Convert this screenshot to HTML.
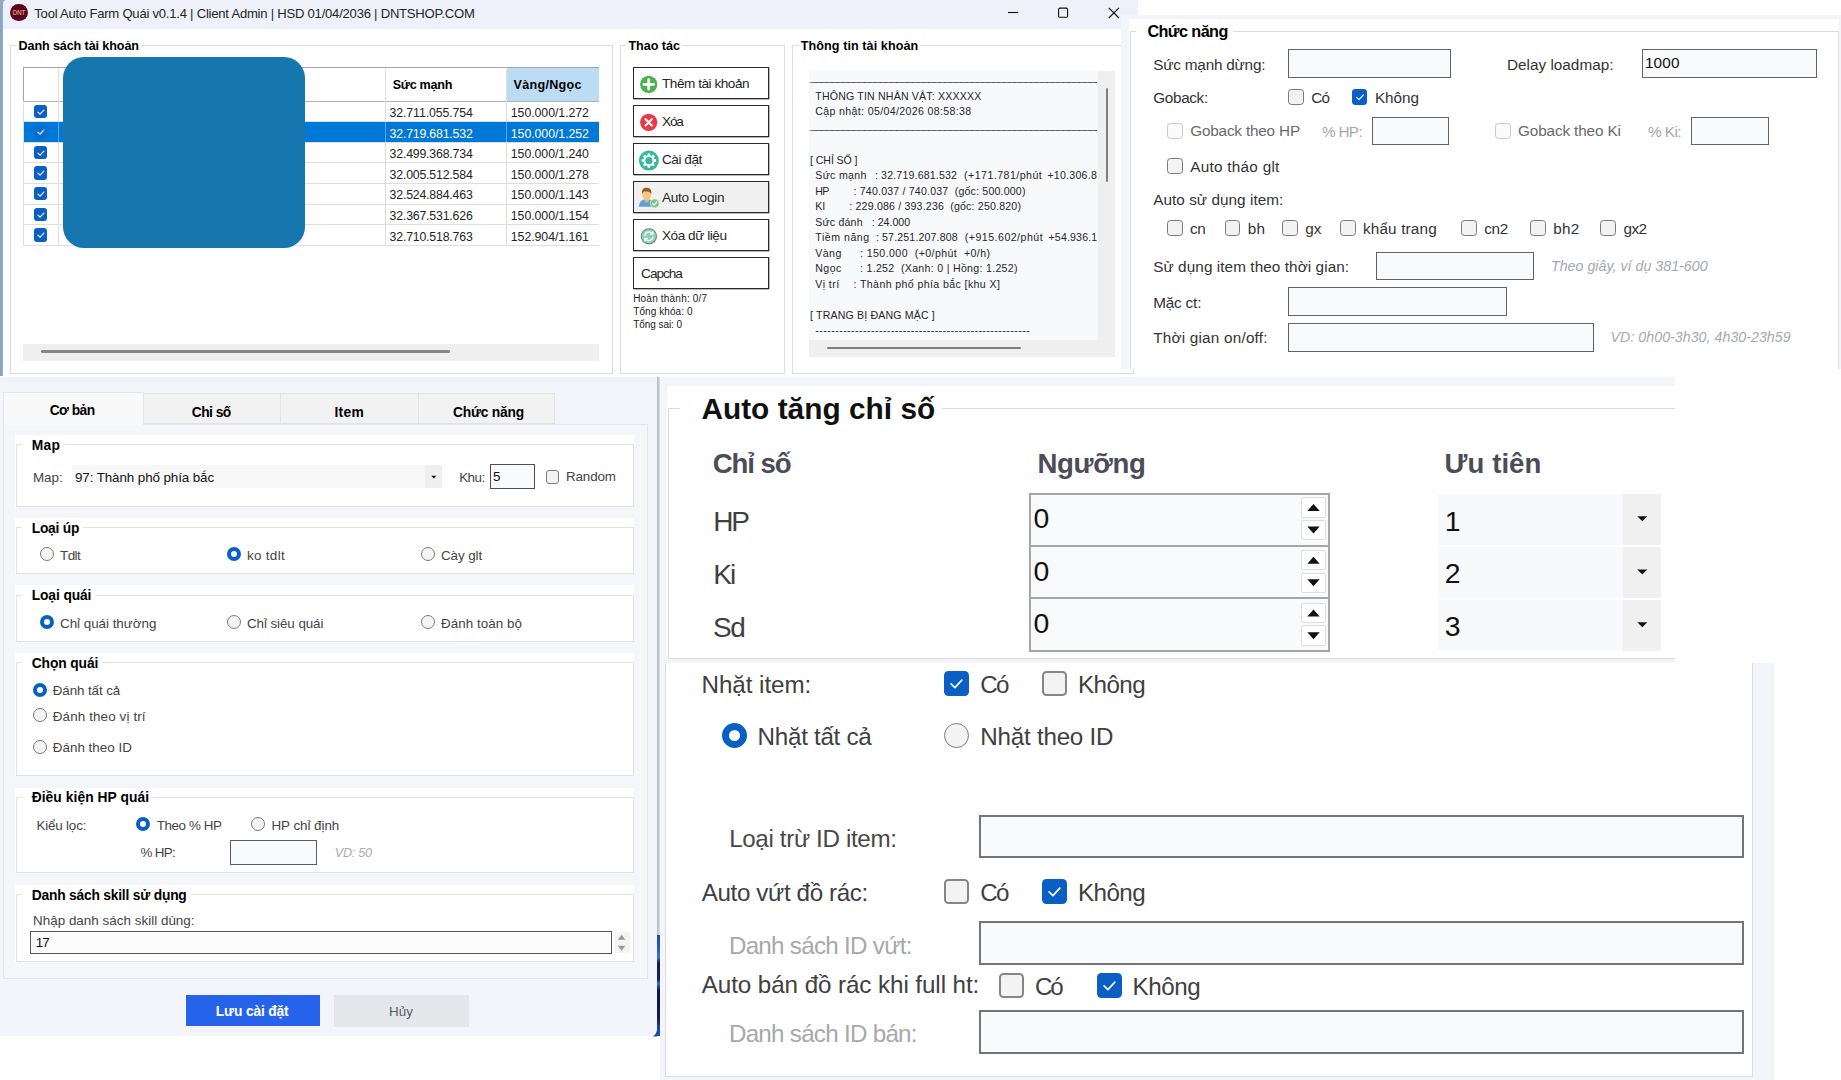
<!DOCTYPE html><html lang="vi"><head><meta charset="utf-8"><title>Tool Auto Farm Quái</title><style>

html,body{margin:0;padding:0;background:#fff;}
body{width:1841px;height:1080px;position:relative;overflow:hidden;font-family:"Liberation Sans", sans-serif;}
.a{position:absolute;}
.t{position:absolute;white-space:pre;line-height:1;}

</style></head><body>
<section aria-label="Tool Auto Farm Quái - cửa sổ chính">
<div class="a" style="left:0px;top:0px;width:1138px;height:377.3px;background:#fff;"></div>
<div class="a" style="left:0px;top:0px;width:1138px;height:28.6px;background:#eef1f9;"></div>
<div class="a" style="left:0px;top:0px;width:3.1px;height:376.2px;background:linear-gradient(90deg,#84a2bf,#93aec8);"></div>
<svg class="a" style="left:0;top:0" width="8" height="6"><path d="M0 0 H6 C4.2 0.4 3.4 1.4 3.1 3.4 V0 Z M3.1 0 V4 H0 V0 Z" fill="#8ba8c4"/></svg>
<div class="a" style="left:10.2px;top:3.9px;width:17.4px;height:17.4px;background:#5e0424;border-radius:9px;"></div>
<div class="t" style="left:12.5px;top:10.16px;font-size:6.6px;color:#c98f5e;font-weight:bold;letter-spacing:-0.35px;">DNT</div>
<div class="t" style="left:34.3px;top:6.8px;font-size:13.1px;color:#262626;letter-spacing:-0.24px;">Tool Auto Farm Quái v0.1.4 | Client Admin | HSD 01/04/2036 | DNTSHOP.COM</div>
<svg class="a" style="left:1000px;top:0" width="130" height="28" viewBox="0 0 130 28"><path d="M8 12.5 H18.2" stroke="#111" stroke-width="1.1" fill="none"/><rect x="58.6" y="8.1" width="9" height="9.2" rx="1.4" fill="none" stroke="#111" stroke-width="1.1"/><path d="M108.8 7.9 L119 18 M119 7.9 L108.8 18" stroke="#111" stroke-width="1.1" fill="none"/></svg>
<div class="a" style="left:9.5px;top:45.2px;width:603px;height:328.4px;border:1px solid #dcdcdc;box-sizing:border-box;"></div>
<div class="t" style="left:16.5px;top:40.22px;font-size:12.6px;color:#000;font-weight:bold;letter-spacing:-0.11px;background:#fff;padding:0 2px 0 2px;">Danh sách tài khoản</div>
<div class="a" style="left:619.5px;top:45.2px;width:165.5px;height:328.4px;border:1px solid #dcdcdc;box-sizing:border-box;"></div>
<div class="t" style="left:626.4px;top:40.22px;font-size:12.6px;color:#000;font-weight:bold;letter-spacing:-0.03px;background:#fff;padding:0 2px 0 2px;">Thao tác</div>
<div class="a" style="left:792px;top:45.2px;width:341.2px;height:328.4px;border:1px solid #dcdcdc;box-sizing:border-box;"></div>
<div class="t" style="left:798.7px;top:40.22px;font-size:12.6px;color:#000;font-weight:bold;letter-spacing:0.08px;background:#fff;padding:0 2px 0 2px;">Thông tin tài khoản</div>
<div class="a" style="left:23.2px;top:67.2px;width:575.8px;height:34.2px;background:#fff;"></div>
<div class="a" style="left:506.5px;top:68.2px;width:92.5px;height:32.4px;background:#bcdcf4;"></div>
<div class="a" style="left:23.2px;top:67.2px;width:575.8px;height:1.1px;background:#a3a3a3;"></div>
<div class="a" style="left:23.2px;top:67.2px;width:1.1px;height:34px;background:#a3a3a3;"></div>
<div class="a" style="left:23.2px;top:100.5px;width:575.8px;height:1.1px;background:#b4b4b4;"></div>
<div class="a" style="left:57.8px;top:69px;width:1px;height:176.3px;background:#dedede;"></div>
<div class="a" style="left:385px;top:69px;width:1px;height:176.3px;background:#dedede;"></div>
<div class="a" style="left:505.5px;top:69px;width:1px;height:176.3px;background:#dedede;"></div>
<div class="a" style="left:23.2px;top:101px;width:0.9px;height:144.3px;background:#dedede;"></div>
<div class="a" style="left:23.2px;top:121.2px;width:575.8px;height:1px;background:#dedede;"></div>
<div class="a" style="left:23.2px;top:141.8px;width:575.8px;height:1px;background:#dedede;"></div>
<div class="a" style="left:23.2px;top:162.4px;width:575.8px;height:1px;background:#dedede;"></div>
<div class="a" style="left:23.2px;top:183px;width:575.8px;height:1px;background:#dedede;"></div>
<div class="a" style="left:23.2px;top:203.6px;width:575.8px;height:1px;background:#dedede;"></div>
<div class="a" style="left:23.2px;top:224.2px;width:575.8px;height:1px;background:#dedede;"></div>
<div class="a" style="left:23.2px;top:244.8px;width:575.8px;height:1px;background:#dedede;"></div>
<div class="a" style="left:24px;top:122.1px;width:575px;height:19.9px;background:#0078d7;"></div>
<div class="a" style="left:57.8px;top:122.1px;width:1px;height:19.9px;background:#5aa5e6;"></div>
<div class="a" style="left:385px;top:122.1px;width:1px;height:19.9px;background:#5aa5e6;"></div>
<div class="a" style="left:505.5px;top:122.1px;width:1px;height:19.9px;background:#5aa5e6;"></div>
<div class="t" style="left:392.7px;top:79.22px;font-size:12.6px;color:#000;font-weight:bold;letter-spacing:-0.28px;">Sức mạnh</div>
<div class="t" style="left:513.5px;top:79.22px;font-size:12.6px;color:#000;font-weight:bold;letter-spacing:0.28px;">Vàng/Ngọc</div>
<div class="t" style="left:389.6px;top:107.02px;font-size:12.3px;color:#242424;letter-spacing:-0.11px;">32.711.055.754</div>
<div class="t" style="left:510.8px;top:107.02px;font-size:12.3px;color:#242424;letter-spacing:-0.04px;">150.000/1.272</div>
<div class="a" style="left:33.7px;top:104.5px;width:13.6px;height:13.6px;background:#0a5fc4;border-radius:3px;"><svg viewBox="0 0 16 16" width="13.6" height="13.6" style="display:block"><path d="M4.6 8.4 L7.1 10.8 L11.6 5.9" fill="none" stroke="#fff" stroke-width="1.29" stroke-linecap="round" stroke-linejoin="round"/></svg></div>
<div class="t" style="left:389.6px;top:127.61px;font-size:12.3px;color:#fff;letter-spacing:-0.18px;">32.719.681.532</div>
<div class="t" style="left:510.8px;top:127.61px;font-size:12.3px;color:#fff;letter-spacing:-0.04px;">150.000/1.252</div>
<div class="a" style="left:33.7px;top:125.1px;width:13.6px;height:13.6px;background:#0a6dd0;border-radius:3px;"><svg viewBox="0 0 16 16" width="13.6" height="13.6" style="display:block"><path d="M4.6 8.4 L7.1 10.8 L11.6 5.9" fill="none" stroke="#fff" stroke-width="1.29" stroke-linecap="round" stroke-linejoin="round"/></svg></div>
<div class="t" style="left:389.6px;top:148.21px;font-size:12.3px;color:#242424;letter-spacing:-0.18px;">32.499.368.734</div>
<div class="t" style="left:510.8px;top:148.21px;font-size:12.3px;color:#242424;letter-spacing:-0.04px;">150.000/1.240</div>
<div class="a" style="left:33.7px;top:145.7px;width:13.6px;height:13.6px;background:#0a5fc4;border-radius:3px;"><svg viewBox="0 0 16 16" width="13.6" height="13.6" style="display:block"><path d="M4.6 8.4 L7.1 10.8 L11.6 5.9" fill="none" stroke="#fff" stroke-width="1.29" stroke-linecap="round" stroke-linejoin="round"/></svg></div>
<div class="t" style="left:389.6px;top:168.82px;font-size:12.3px;color:#242424;letter-spacing:-0.18px;">32.005.512.584</div>
<div class="t" style="left:510.8px;top:168.82px;font-size:12.3px;color:#242424;letter-spacing:-0.04px;">150.000/1.278</div>
<div class="a" style="left:33.7px;top:166.3px;width:13.6px;height:13.6px;background:#0a5fc4;border-radius:3px;"><svg viewBox="0 0 16 16" width="13.6" height="13.6" style="display:block"><path d="M4.6 8.4 L7.1 10.8 L11.6 5.9" fill="none" stroke="#fff" stroke-width="1.29" stroke-linecap="round" stroke-linejoin="round"/></svg></div>
<div class="t" style="left:389.6px;top:189.41px;font-size:12.3px;color:#242424;letter-spacing:-0.18px;">32.524.884.463</div>
<div class="t" style="left:510.8px;top:189.41px;font-size:12.3px;color:#242424;letter-spacing:-0.04px;">150.000/1.143</div>
<div class="a" style="left:33.7px;top:186.9px;width:13.6px;height:13.6px;background:#0a5fc4;border-radius:3px;"><svg viewBox="0 0 16 16" width="13.6" height="13.6" style="display:block"><path d="M4.6 8.4 L7.1 10.8 L11.6 5.9" fill="none" stroke="#fff" stroke-width="1.29" stroke-linecap="round" stroke-linejoin="round"/></svg></div>
<div class="t" style="left:389.6px;top:210.02px;font-size:12.3px;color:#242424;letter-spacing:-0.18px;">32.367.531.626</div>
<div class="t" style="left:510.8px;top:210.02px;font-size:12.3px;color:#242424;letter-spacing:-0.04px;">150.000/1.154</div>
<div class="a" style="left:33.7px;top:207.5px;width:13.6px;height:13.6px;background:#0a5fc4;border-radius:3px;"><svg viewBox="0 0 16 16" width="13.6" height="13.6" style="display:block"><path d="M4.6 8.4 L7.1 10.8 L11.6 5.9" fill="none" stroke="#fff" stroke-width="1.29" stroke-linecap="round" stroke-linejoin="round"/></svg></div>
<div class="t" style="left:389.6px;top:230.61px;font-size:12.3px;color:#242424;letter-spacing:-0.18px;">32.710.518.763</div>
<div class="t" style="left:510.8px;top:230.61px;font-size:12.3px;color:#242424;letter-spacing:-0.04px;">152.904/1.161</div>
<div class="a" style="left:33.7px;top:228.1px;width:13.6px;height:13.6px;background:#0a5fc4;border-radius:3px;"><svg viewBox="0 0 16 16" width="13.6" height="13.6" style="display:block"><path d="M4.6 8.4 L7.1 10.8 L11.6 5.9" fill="none" stroke="#fff" stroke-width="1.29" stroke-linecap="round" stroke-linejoin="round"/></svg></div>
<div class="a" style="left:62.8px;top:57px;width:242.4px;height:190.6px;background:#1577ad;border-radius:21px;"></div>
<div class="a" style="left:23.2px;top:343.5px;width:575.8px;height:17px;background:#efefef;"></div>
<div class="a" style="left:41.2px;top:350.1px;width:408.8px;height:2.5px;background:#878787;border-radius:1.3px;"></div>
<div class="a" style="left:633px;top:67.2px;width:135.6px;height:32.3px;background:#fff;border:1.2px solid #2a2a2a;box-sizing:border-box;box-shadow:0.6px 0.6px 0 #8a8a8a;"></div>
<div class="t" style="left:662px;top:77.08px;font-size:13.6px;color:#262626;letter-spacing:-0.47px;">Thêm tài khoản</div>
<div class="a" style="left:633px;top:105.2px;width:135.6px;height:32.3px;background:#fff;border:1.2px solid #2a2a2a;box-sizing:border-box;box-shadow:0.6px 0.6px 0 #8a8a8a;"></div>
<div class="t" style="left:662px;top:115.08px;font-size:13.6px;color:#262626;letter-spacing:-1.15px;">Xóa</div>
<div class="a" style="left:633px;top:143.2px;width:135.6px;height:32.3px;background:#fff;border:1.2px solid #2a2a2a;box-sizing:border-box;box-shadow:0.6px 0.6px 0 #8a8a8a;"></div>
<div class="t" style="left:662px;top:153.08px;font-size:13.6px;color:#262626;letter-spacing:-0.47px;">Cài đặt</div>
<div class="a" style="left:633px;top:181.2px;width:135.6px;height:32.3px;background:#f0f0f0;border:1.2px solid #2a2a2a;box-sizing:border-box;box-shadow:0.6px 0.6px 0 #8a8a8a;"></div>
<div class="t" style="left:662px;top:191.08px;font-size:13.6px;color:#262626;letter-spacing:-0.28px;">Auto Login</div>
<div class="a" style="left:633px;top:219.2px;width:135.6px;height:32.3px;background:#fff;border:1.2px solid #2a2a2a;box-sizing:border-box;box-shadow:0.6px 0.6px 0 #8a8a8a;"></div>
<div class="t" style="left:662px;top:229.08px;font-size:13.6px;color:#262626;letter-spacing:-0.46px;">Xóa dữ liệu</div>
<div class="a" style="left:633px;top:257.2px;width:135.6px;height:32.3px;background:#fff;border:1.2px solid #2a2a2a;box-sizing:border-box;box-shadow:0.6px 0.6px 0 #8a8a8a;"></div>
<div class="t" style="left:641.1px;top:267.08px;font-size:13.6px;color:#262626;letter-spacing:-1.01px;">Capcha</div>
<svg class="a" style="left:638px;top:67px" width="24" height="190" viewBox="0 0 24 190"><circle cx="10.7" cy="17.4" r="8.6" fill="#4caf50"/><path d="M10.7 12.6 V22.2 M5.9 17.4 H15.5" stroke="#fff" stroke-width="2.8" stroke-linecap="round"/><circle cx="10.7" cy="55.3" r="8.6" fill="#e8394a"/><path d="M7.6 52.2 L13.8 58.4 M13.8 52.2 L7.6 58.4" stroke="#fff" stroke-width="2.1" stroke-linecap="round"/><circle cx="10.9" cy="93.6" r="10" fill="#35b8a0"/><g transform="translate(10.9 93.6)" fill="none" stroke="#fff"><circle r="4.6" stroke-width="2"/><g stroke-width="2.6" stroke-linecap="butt"><path d="M0 -7.2 V-5 M0 7.2 V5 M-7.2 0 H-5 M7.2 0 H5 M-5.1 -5.1 L-3.6 -3.6 M5.1 5.1 L3.6 3.6 M-5.1 5.1 L-3.6 3.6 M5.1 -5.1 L3.6 -3.6"/></g></g><g transform="translate(0 114)"><path d="M0.9 25.8 C1.2 20.8 3.6 19 6.2 18.4 L11.2 18.4 C13.8 19 15.8 20.8 16 25.8 Z" fill="#5e9fdc"/><path d="M6.6 17 H10.8 V20.4 C9.6 21.6 7.8 21.6 6.6 20.4 Z" fill="#e8b76b"/><ellipse cx="8.7" cy="13.4" rx="4.4" ry="5.6" fill="#f4c77f"/><path d="M4.1 13 C3.4 8.2 5.8 6.6 8.9 6.8 C12.2 7 13.9 9 13.3 13 C12.4 10.8 10.2 10 6.2 10.6 C5.2 11 4.5 11.8 4.1 13 Z" fill="#9a5a2a"/><circle cx="16.7" cy="22.4" r="4.5" fill="#7cc780" stroke="#d8efd9" stroke-width="0.8"/><path d="M14.5 22.5 L16.1 24.1 L18.9 21" fill="none" stroke="#fff" stroke-width="1.2" stroke-linecap="round" stroke-linejoin="round"/></g><circle cx="10.9" cy="169.3" r="7.6" fill="#8fd1b8" stroke="#6f7f86" stroke-width="1.1"/><g transform="translate(10.9 169.3)" fill="none" stroke="#eafaf3" stroke-width="1.5" stroke-linecap="round"><path d="M-4.2 -1 A4.4 4.4 0 0 1 3.6 -2.6 M4.2 1 A4.4 4.4 0 0 1 -3.6 2.6"/><path d="M3.9 -4.6 V-2.3 H1.6 M-3.9 4.6 V2.3 H-1.6"/></g></svg>
<div class="t" style="left:633.2px;top:294.18px;font-size:10px;color:#1a1a1a;letter-spacing:0.2px;">Hoàn thành: 0/7</div>
<div class="t" style="left:633.2px;top:307.09px;font-size:10px;color:#1a1a1a;letter-spacing:0.08px;">Tổng khóa: 0</div>
<div class="t" style="left:633.2px;top:320.3px;font-size:10px;color:#1a1a1a;letter-spacing:-0.06px;">Tổng sai: 0</div>
<div class="a" style="left:808.8px;top:70.5px;width:306.4px;height:286.3px;background:#f8f9fb;"></div>
<div class="a" style="left:1097.8px;top:70.5px;width:17.4px;height:286.3px;background:#efefef;"></div>
<div class="a" style="left:808.8px;top:340px;width:306.4px;height:16.8px;background:#efefef;"></div>
<div class="a" style="left:1105.8px;top:88px;width:2.4px;height:94px;background:#7e7e7e;border-radius:1.2px;"></div>
<div class="a" style="left:827px;top:346.9px;width:193.8px;height:2.4px;background:#7e7e7e;border-radius:1.2px;"></div>
<div class="t" style="left:810px;top:78.03px;font-size:9px;color:#333;width:287.4px;overflow:hidden;letter-spacing:-1px;">────────────────────────────────────────────────────────────</div>
<div class="t" style="left:815.3px;top:90.8px;font-size:10.6px;color:#262626;letter-spacing:0.17px;">THÔNG TIN NHÂN VẬT: XXXXXX</div>
<div class="t" style="left:815.3px;top:106.3px;font-size:10.6px;color:#262626;letter-spacing:0.35px;">Cập nhật: 05/04/2026 08:58:38</div>
<div class="t" style="left:810px;top:126.03px;font-size:9px;color:#333;width:287.4px;overflow:hidden;letter-spacing:-1px;">────────────────────────────────────────────────────────────</div>
<div class="t" style="left:810.1px;top:154.55px;font-size:10.6px;color:#262626;letter-spacing:-0.1px;">[ CHỈ SỐ ]</div>
<div class="t" style="left:815.3px;top:170.05px;font-size:10.6px;color:#262626;letter-spacing:0.31px;">Sức mạnh</div>
<div class="t" style="left:874.9px;top:170.05px;font-size:10.6px;color:#262626;letter-spacing:0.17px;">: 32.719.681.532</div>
<div class="t" style="left:964px;top:170.05px;font-size:10.6px;color:#262626;letter-spacing:0.48px;">(+171.781/phút</div>
<div class="t" style="left:1047.4px;top:170.05px;font-size:10.6px;color:#262626;letter-spacing:0.25px;width:49.8px;overflow:hidden;">+10.306.8</div>
<div class="t" style="left:815.3px;top:185.55px;font-size:10.6px;color:#262626;letter-spacing:-0.75px;">HP</div>
<div class="t" style="left:853.5px;top:185.55px;font-size:10.6px;color:#262626;letter-spacing:0.19px;">: 740.037 / 740.037  (gốc: 500.000)</div>
<div class="t" style="left:815.3px;top:201.05px;font-size:10.6px;color:#262626;letter-spacing:-0.21px;">KI</div>
<div class="t" style="left:849.3px;top:201.05px;font-size:10.6px;color:#262626;letter-spacing:0.18px;">: 229.086 / 393.236  (gốc: 250.820)</div>
<div class="t" style="left:815.3px;top:216.55px;font-size:10.6px;color:#262626;letter-spacing:0.18px;">Sức đánh</div>
<div class="t" style="left:871.7px;top:216.55px;font-size:10.6px;color:#262626;letter-spacing:0.03px;">: 24.000</div>
<div class="t" style="left:815.3px;top:232.05px;font-size:10.6px;color:#262626;letter-spacing:0.52px;">Tiềm năng</div>
<div class="t" style="left:875.9px;top:232.05px;font-size:10.6px;color:#262626;letter-spacing:0.15px;">: 57.251.207.808</div>
<div class="t" style="left:964.8px;top:232.05px;font-size:10.6px;color:#262626;letter-spacing:0.48px;">(+915.602/phút</div>
<div class="t" style="left:1048.5px;top:232.05px;font-size:10.6px;color:#262626;letter-spacing:0.16px;width:48.7px;overflow:hidden;">+54.936.1</div>
<div class="t" style="left:815.3px;top:247.55px;font-size:10.6px;color:#262626;letter-spacing:0.41px;">Vàng</div>
<div class="t" style="left:860px;top:247.55px;font-size:10.6px;color:#262626;letter-spacing:0.42px;">: 150.000  (+0/phút  +0/h)</div>
<div class="t" style="left:815.3px;top:263.05px;font-size:10.6px;color:#262626;letter-spacing:0.42px;">Ngọc</div>
<div class="t" style="left:860px;top:263.05px;font-size:10.6px;color:#262626;letter-spacing:0.3px;">: 1.252  (Xanh: 0 | Hồng: 1.252)</div>
<div class="t" style="left:815.3px;top:278.55px;font-size:10.6px;color:#262626;letter-spacing:0.4px;">Vị trí</div>
<div class="t" style="left:853.5px;top:278.55px;font-size:10.6px;color:#262626;letter-spacing:0.39px;">: Thành phố phía bắc [khu X]</div>
<div class="t" style="left:810.1px;top:309.55px;font-size:10.6px;color:#262626;letter-spacing:0.15px;">[ TRANG BỊ ĐANG MẶC ]</div>
<div class="t" style="left:815.3px;top:325.05px;font-size:10.6px;color:#262626;letter-spacing:0.45px;">------------------------------------------------------</div>
</section>
<section aria-label="Chức năng">
<div class="a" style="left:1120.5px;top:15px;width:720.5px;height:353.6px;background:#f3f5fa;"></div>
<div class="a" style="left:1138px;top:0px;width:703px;height:15px;background:#fff;"></div>
<div class="a" style="left:1129.4px;top:19.2px;width:709.2px;height:349.4px;background:#fff;"></div>
<div class="a" style="left:1138px;top:368.6px;width:703px;height:8.7px;background:#fff;"></div>
<div class="a" style="left:1130px;top:30.7px;width:708.6px;height:341.3px;border:1px solid #dcdcdc;box-sizing:border-box;"></div>
<div class="t" style="left:1136.4px;top:23px;font-size:16.2px;color:#000;font-weight:bold;letter-spacing:-0.57px;background:#fff;padding:0 5px 0 11px;">Chức năng</div>
<div class="a" style="left:1129.4px;top:368.6px;width:711.6px;height:4.4px;background:#fff;"></div>
<div class="a" style="left:1120.5px;top:368.6px;width:13.5px;height:5.4px;border-bottom:1px solid #dcdcdc;border-right:1px solid #dcdcdc;box-sizing:border-box;background:#fff;"></div>
<div class="t" style="left:1153.3px;top:56.99px;font-size:15.3px;color:#333;letter-spacing:-0.21px;">Sức mạnh dừng:</div>
<div class="t" style="left:1507px;top:56.99px;font-size:15.3px;color:#333;letter-spacing:0.01px;">Delay loadmap:</div>
<div class="t" style="left:1153.3px;top:90.49px;font-size:15.3px;color:#333;letter-spacing:-0.35px;">Goback:</div>
<div class="t" style="left:1311.2px;top:89.88px;font-size:15.3px;color:#333;letter-spacing:-0.71px;">Có</div>
<div class="t" style="left:1374.9px;top:89.88px;font-size:15.3px;color:#333;letter-spacing:-0.03px;">Không</div>
<div class="t" style="left:1190.2px;top:123.49px;font-size:15.3px;color:#6a6a6a;letter-spacing:-0.18px;">Goback theo HP</div>
<div class="t" style="left:1322px;top:124.08px;font-size:15.3px;color:#a6a6a6;letter-spacing:-0.68px;">% HP:</div>
<div class="t" style="left:1518px;top:123.49px;font-size:15.3px;color:#6a6a6a;letter-spacing:-0.13px;">Goback theo Ki</div>
<div class="t" style="left:1648px;top:124.08px;font-size:15.3px;color:#a6a6a6;letter-spacing:-0.53px;">% Ki:</div>
<div class="t" style="left:1190.2px;top:159.18px;font-size:15.3px;color:#333;letter-spacing:0.27px;">Auto tháo glt</div>
<div class="t" style="left:1153.2px;top:191.68px;font-size:15.3px;color:#333;letter-spacing:0.05px;">Auto sử dụng item:</div>
<div class="t" style="left:1190px;top:220.88px;font-size:15.3px;color:#333;letter-spacing:-0.37px;">cn</div>
<div class="t" style="left:1247.8px;top:220.88px;font-size:15.3px;color:#333;letter-spacing:0.19px;">bh</div>
<div class="t" style="left:1305.3px;top:220.88px;font-size:15.3px;color:#333;letter-spacing:-0.04px;">gx</div>
<div class="t" style="left:1362.9px;top:220.88px;font-size:15.3px;color:#333;letter-spacing:0.17px;">khẩu trang</div>
<div class="t" style="left:1484.2px;top:220.88px;font-size:15.3px;color:#333;letter-spacing:-0.35px;">cn2</div>
<div class="t" style="left:1553.3px;top:220.88px;font-size:15.3px;color:#333;letter-spacing:0.23px;">bh2</div>
<div class="t" style="left:1623.4px;top:220.88px;font-size:15.3px;color:#333;letter-spacing:-0.47px;">gx2</div>
<div class="t" style="left:1153.2px;top:258.78px;font-size:15.3px;color:#333;letter-spacing:0.08px;">Sử dụng item theo thời gian:</div>
<div class="t" style="left:1551px;top:259.1px;font-size:14.2px;color:#a4a7b4;font-style:italic;letter-spacing:0.03px;">Theo giây, ví dụ 381-600</div>
<div class="t" style="left:1153.2px;top:295.28px;font-size:15.3px;color:#333;letter-spacing:-0.18px;">Mặc ct:</div>
<div class="t" style="left:1153.2px;top:330.08px;font-size:15.3px;color:#333;letter-spacing:0.21px;">Thời gian on/off:</div>
<div class="t" style="left:1610.6px;top:330.3px;font-size:14.2px;color:#a4a7b4;font-style:italic;letter-spacing:0.04px;">VD: 0h00-3h30, 4h30-23h59</div>
<div class="a" style="left:1288.2px;top:49.3px;width:162.8px;height:28.4px;background:#f9fafc;border:1.1px solid #626262;box-sizing:border-box;"></div>
<div class="a" style="left:1642px;top:49.3px;width:175px;height:28.4px;background:#f9fafc;border:1.1px solid #626262;box-sizing:border-box;"></div>
<div class="t" style="left:1644.9px;top:55.08px;font-size:15.3px;color:#111;letter-spacing:0.16px;">1000</div>
<div class="a" style="left:1371.6px;top:116.9px;width:77.7px;height:28.3px;background:#f9fafc;border:1.1px solid #626262;box-sizing:border-box;"></div>
<div class="a" style="left:1691px;top:116.9px;width:78.2px;height:28.3px;background:#f9fafc;border:1.1px solid #626262;box-sizing:border-box;"></div>
<div class="a" style="left:1375.7px;top:251.6px;width:158.7px;height:28.4px;background:#f9fafc;border:1.1px solid #626262;box-sizing:border-box;"></div>
<div class="a" style="left:1288.3px;top:287.3px;width:218.5px;height:28.3px;background:#f9fafc;border:1.1px solid #626262;box-sizing:border-box;"></div>
<div class="a" style="left:1288.3px;top:323.3px;width:305.6px;height:28.4px;background:#f9fafc;border:1.1px solid #626262;box-sizing:border-box;"></div>
<div class="a" style="left:1288.1px;top:89px;width:15.8px;height:15.8px;background:#f3f3f3;border:1px solid #7a7a7a;border-radius:3.48px;box-sizing:border-box;"></div>
<div class="a" style="left:1351.6px;top:89px;width:15.8px;height:15.8px;background:#0a5fc4;border-radius:3.48px;"><svg viewBox="0 0 16 16" width="15.8" height="15.8" style="display:block"><path d="M4.6 8.4 L7.1 10.8 L11.6 5.9" fill="none" stroke="#fff" stroke-width="1.11" stroke-linecap="round" stroke-linejoin="round"/></svg></div>
<div class="a" style="left:1167px;top:122.8px;width:15.8px;height:15.8px;background:#fafafa;border:1px solid #c9c9c9;border-radius:3.48px;box-sizing:border-box;"></div>
<div class="a" style="left:1494.9px;top:122.8px;width:15.8px;height:15.8px;background:#fafafa;border:1px solid #c9c9c9;border-radius:3.48px;box-sizing:border-box;"></div>
<div class="a" style="left:1167px;top:158.1px;width:15.8px;height:15.8px;background:#f3f3f3;border:1px solid #7a7a7a;border-radius:3.48px;box-sizing:border-box;"></div>
<div class="a" style="left:1167px;top:220.1px;width:15.8px;height:15.8px;background:#f3f3f3;border:1px solid #7a7a7a;border-radius:3.48px;box-sizing:border-box;"></div>
<div class="a" style="left:1224.7px;top:220.1px;width:15.8px;height:15.8px;background:#f3f3f3;border:1px solid #7a7a7a;border-radius:3.48px;box-sizing:border-box;"></div>
<div class="a" style="left:1282.1px;top:220.1px;width:15.8px;height:15.8px;background:#f3f3f3;border:1px solid #7a7a7a;border-radius:3.48px;box-sizing:border-box;"></div>
<div class="a" style="left:1339.9px;top:220.1px;width:15.8px;height:15.8px;background:#f3f3f3;border:1px solid #7a7a7a;border-radius:3.48px;box-sizing:border-box;"></div>
<div class="a" style="left:1461.1px;top:220.1px;width:15.8px;height:15.8px;background:#f3f3f3;border:1px solid #7a7a7a;border-radius:3.48px;box-sizing:border-box;"></div>
<div class="a" style="left:1530.4px;top:220.1px;width:15.8px;height:15.8px;background:#f3f3f3;border:1px solid #7a7a7a;border-radius:3.48px;box-sizing:border-box;"></div>
<div class="a" style="left:1600.1px;top:220.1px;width:15.8px;height:15.8px;background:#f3f3f3;border:1px solid #7a7a7a;border-radius:3.48px;box-sizing:border-box;"></div>
</section>
<section aria-label="Cài đặt - Cơ bản">
<div class="a" style="left:0px;top:377.3px;width:660px;height:659px;background:#f3f5fa;"></div>
<div class="a" style="left:0px;top:377.3px;width:657px;height:5.7px;background:#eff2f8;"></div>
<div class="a" style="left:657px;top:377.3px;width:3.2px;height:659px;background:linear-gradient(90deg,#b3b6be,#c6c9d0 55%,#e3e5ea);"></div>
<div class="a" style="left:657px;top:935.4px;width:3px;height:100.9px;background:linear-gradient(180deg,#1c4aa6 0,#2458b8 12%,#3576cc 22%,#101c4e 28%,#12225a 44%,#3070c8 48%,#0e1742 55%,#101c50 82%,#1b47a6 92%,#1d4db0 100%);"></div>
<svg class="a" style="left:652px;top:1029px" width="6" height="8"><path d="M5.2 0 V7.4 H0.6 C3.4 6.2 4.8 3.6 5.2 0 Z" fill="#1c4aaa"/></svg>
<div class="a" style="left:2.5px;top:423.7px;width:645.1px;height:554.9px;background:#f5f6fa;border:1px solid #e6e6e8;box-sizing:border-box;"></div>
<div class="a" style="left:143.4px;top:393.2px;width:412px;height:31px;background:#f2f2f2;border:1px solid #e3e3e3;box-sizing:border-box;"></div>
<div class="a" style="left:280px;top:394px;width:1px;height:30px;background:#e3e3e3;"></div>
<div class="a" style="left:418.2px;top:394px;width:1px;height:30px;background:#e3e3e3;"></div>
<div class="a" style="left:2.5px;top:391.7px;width:141.1px;height:33.3px;background:#f9f9fa;border:1px solid #e6e6e8;box-sizing:border-box;border-bottom:none;"></div>
<div class="t" style="left:49.7px;top:404.34px;font-size:13.8px;color:#000;font-weight:bold;letter-spacing:-0.55px;">Cơ bản</div>
<div class="t" style="left:191.8px;top:405.84px;font-size:13.8px;color:#000;font-weight:bold;letter-spacing:-0.54px;">Chỉ số</div>
<div class="t" style="left:334.4px;top:405.84px;font-size:13.8px;color:#000;font-weight:bold;letter-spacing:0.32px;">Item</div>
<div class="t" style="left:453px;top:405.84px;font-size:13.8px;color:#000;font-weight:bold;letter-spacing:-0.22px;">Chức năng</div>
<div class="a" style="left:15.3px;top:434.8px;width:619.1px;height:72.4px;background:#fff;"></div>
<div class="a" style="left:15.5px;top:444.1px;width:618.7px;height:63.4px;border:1px solid #e2e2e4;box-sizing:border-box;"></div>
<div class="t" style="left:21.7px;top:438.54px;font-size:13.8px;color:#000;font-weight:bold;letter-spacing:0.32px;background:#fff;padding:0 4px 0 10px;">Map</div>
<div class="a" style="left:15.3px;top:518px;width:619.1px;height:55.8px;background:#fff;"></div>
<div class="a" style="left:15.5px;top:527.1px;width:618.7px;height:47px;border:1px solid #e2e2e4;box-sizing:border-box;"></div>
<div class="t" style="left:21.7px;top:521.54px;font-size:13.8px;color:#000;font-weight:bold;letter-spacing:-0.21px;background:#fff;padding:0 4px 0 10px;">Loại úp</div>
<div class="a" style="left:15.3px;top:585.4px;width:619.1px;height:56px;background:#fff;"></div>
<div class="a" style="left:15.5px;top:594.8px;width:618.7px;height:46.9px;border:1px solid #e2e2e4;box-sizing:border-box;"></div>
<div class="t" style="left:21.7px;top:589.25px;font-size:13.8px;color:#000;font-weight:bold;letter-spacing:-0.1px;background:#fff;padding:0 4px 0 10px;">Loại quái</div>
<div class="a" style="left:15.3px;top:653px;width:619.1px;height:123px;background:#fff;"></div>
<div class="a" style="left:15.5px;top:662.1px;width:618.7px;height:114.2px;border:1px solid #e2e2e4;box-sizing:border-box;"></div>
<div class="t" style="left:21.7px;top:656.54px;font-size:13.8px;color:#000;font-weight:bold;letter-spacing:-0.1px;background:#fff;padding:0 4px 0 10px;">Chọn quái</div>
<div class="a" style="left:15.3px;top:787.7px;width:619.1px;height:85.1px;background:#fff;"></div>
<div class="a" style="left:15.5px;top:797px;width:618.7px;height:76.1px;border:1px solid #e2e2e4;box-sizing:border-box;"></div>
<div class="t" style="left:21.7px;top:791.45px;font-size:13.8px;color:#000;font-weight:bold;letter-spacing:0.07px;background:#fff;padding:0 4px 0 10px;">Điều kiện HP quái</div>
<div class="a" style="left:15.3px;top:884.8px;width:619.1px;height:77px;background:#fff;"></div>
<div class="a" style="left:15.5px;top:894.2px;width:618.7px;height:67.9px;border:1px solid #e2e2e4;box-sizing:border-box;"></div>
<div class="t" style="left:21.7px;top:888.65px;font-size:13.8px;color:#000;font-weight:bold;letter-spacing:-0.2px;background:#fff;padding:0 4px 0 10px;">Danh sách skill sử dụng</div>
<div class="t" style="left:33px;top:470.81px;font-size:13.4px;color:#444;letter-spacing:-0.05px;">Map:</div>
<div class="a" style="left:72px;top:465.3px;width:370.2px;height:23.1px;background:#f8f8f9;"></div>
<div class="a" style="left:425px;top:465.3px;width:17.2px;height:23.1px;background:#efefef;"></div>
<svg class="a" style="left:0;top:0" width="1841" height="1080"><polygon points="431.3,475.8 436.3,475.8 433.8,478.6" fill="#111"/></svg>
<div class="t" style="left:75px;top:470.81px;font-size:13.4px;color:#151515;letter-spacing:-0.1px;">97: Thành phố phía bắc</div>
<div class="t" style="left:459.2px;top:470.81px;font-size:13.4px;color:#444;letter-spacing:-0.5px;">Khu:</div>
<div class="a" style="left:490.2px;top:464.3px;width:44.9px;height:24.4px;background:#f9fafc;border:1.1px solid #4f4f4f;box-sizing:border-box;"></div>
<div class="t" style="left:493px;top:470.1px;font-size:13.4px;color:#111;">5</div>
<div class="a" style="left:545.6px;top:470px;width:13.8px;height:13.8px;background:#f3f3f3;border:1px solid #7a7a7a;border-radius:3.04px;box-sizing:border-box;"></div>
<div class="t" style="left:565.9px;top:469.9px;font-size:13.4px;color:#444;letter-spacing:-0.1px;">Random</div>
<div class="a" style="left:39.6px;top:547px;width:14px;height:14px;background:#f4f4f4;border:1px solid #7a7a7a;border-radius:7px;box-sizing:border-box;"></div>
<div class="t" style="left:60px;top:549.4px;font-size:13.4px;color:#444;letter-spacing:-0.55px;">Tdlt</div>
<div class="a" style="left:226.6px;top:547px;width:14px;height:14px;background:#fff;border:4.27px solid #0a5fc4;border-radius:7px;box-sizing:border-box;"></div>
<div class="t" style="left:247px;top:549.4px;font-size:13.4px;color:#444;letter-spacing:0.32px;">ko tdlt</div>
<div class="a" style="left:420.6px;top:547px;width:14px;height:14px;background:#f4f4f4;border:1px solid #7a7a7a;border-radius:7px;box-sizing:border-box;"></div>
<div class="t" style="left:441px;top:549.4px;font-size:13.4px;color:#444;letter-spacing:-0.09px;">Cày glt</div>
<div class="a" style="left:39.6px;top:614.8px;width:14px;height:14px;background:#fff;border:4.27px solid #0a5fc4;border-radius:7px;box-sizing:border-box;"></div>
<div class="t" style="left:60px;top:617.21px;font-size:13.4px;color:#444;letter-spacing:-0.02px;">Chỉ quái thường</div>
<div class="a" style="left:226.6px;top:614.8px;width:14px;height:14px;background:#f4f4f4;border:1px solid #7a7a7a;border-radius:7px;box-sizing:border-box;"></div>
<div class="t" style="left:247px;top:617.21px;font-size:13.4px;color:#444;letter-spacing:-0.08px;">Chỉ siêu quái</div>
<div class="a" style="left:420.6px;top:614.8px;width:14px;height:14px;background:#f4f4f4;border:1px solid #7a7a7a;border-radius:7px;box-sizing:border-box;"></div>
<div class="t" style="left:441px;top:617.21px;font-size:13.4px;color:#444;letter-spacing:0.06px;">Đánh toàn bộ</div>
<div class="a" style="left:32.7px;top:682.5px;width:14px;height:14px;background:#fff;border:4.27px solid #0a5fc4;border-radius:7px;box-sizing:border-box;"></div>
<div class="t" style="left:52.8px;top:684.21px;font-size:13.4px;color:#444;letter-spacing:-0.11px;">Đánh tất cả</div>
<div class="a" style="left:32.7px;top:708px;width:14px;height:14px;background:#f4f4f4;border:1px solid #7a7a7a;border-radius:7px;box-sizing:border-box;"></div>
<div class="t" style="left:52.8px;top:710.21px;font-size:13.4px;color:#444;letter-spacing:0.13px;">Đánh theo vị trí</div>
<div class="a" style="left:32.7px;top:739.6px;width:14px;height:14px;background:#f4f4f4;border:1px solid #7a7a7a;border-radius:7px;box-sizing:border-box;"></div>
<div class="t" style="left:52.8px;top:740.9px;font-size:13.4px;color:#444;letter-spacing:0.01px;">Đánh theo ID</div>
<div class="t" style="left:36.4px;top:818.6px;font-size:13.4px;color:#444;letter-spacing:-0.17px;">Kiểu lọc:</div>
<div class="a" style="left:136.4px;top:817.2px;width:14px;height:14px;background:#fff;border:4.27px solid #0a5fc4;border-radius:7px;box-sizing:border-box;"></div>
<div class="t" style="left:156.8px;top:818.6px;font-size:13.4px;color:#444;letter-spacing:-0.43px;">Theo % HP</div>
<div class="a" style="left:250.6px;top:817.2px;width:14px;height:14px;background:#f4f4f4;border:1px solid #7a7a7a;border-radius:7px;box-sizing:border-box;"></div>
<div class="t" style="left:271.5px;top:818.6px;font-size:13.4px;color:#444;letter-spacing:-0.05px;">HP chỉ định</div>
<div class="t" style="left:140.5px;top:846.1px;font-size:13.4px;color:#444;letter-spacing:-0.68px;">% HP:</div>
<div class="a" style="left:230.3px;top:840px;width:86.4px;height:24.6px;background:#f9fafc;border:1.1px solid #5c5c5c;box-sizing:border-box;"></div>
<div class="t" style="left:334.8px;top:846.92px;font-size:12.6px;color:#a9abb3;font-style:italic;letter-spacing:-0.26px;">VD: 50</div>
<div class="t" style="left:33px;top:914.4px;font-size:13.4px;color:#444;letter-spacing:0.03px;">Nhập danh sách skill dùng:</div>
<div class="a" style="left:29.5px;top:931px;width:582.3px;height:23px;background:#fbfbfc;border:1.1px solid #565656;box-sizing:border-box;"></div>
<div class="t" style="left:35.7px;top:936.4px;font-size:13.4px;color:#111;letter-spacing:-0.94px;">17</div>
<div class="a" style="left:615px;top:932px;width:14.6px;height:20.6px;background:#f4f4f5;"></div>
<svg class="a" style="left:0;top:0" width="1841" height="1080"><polygon points="617.8,939.7 625.4,939.7 621.6,934.7" fill="#9a9a9a"/></svg>
<svg class="a" style="left:0;top:0" width="1841" height="1080"><polygon points="617.8,945.7 625.4,945.7 621.6,950.7" fill="#9a9a9a"/></svg>
<div class="a" style="left:186px;top:995.4px;width:133.6px;height:30.6px;background:#2563eb;"></div>
<div class="t" style="left:215.8px;top:1005.25px;font-size:13.8px;color:#fff;font-weight:bold;letter-spacing:-0.15px;">Lưu cài đặt</div>
<div class="a" style="left:334.4px;top:995px;width:134.8px;height:31.6px;background:#e5e7eb;"></div>
<div class="t" style="left:389px;top:1005.01px;font-size:13.4px;color:#565b66;letter-spacing:0.07px;">Hủy</div>
</section>
<section aria-label="Auto tăng chỉ số">
<div class="a" style="left:660px;top:377.3px;width:1014.8px;height:286.1px;background:#f3f5fa;"></div>
<div class="a" style="left:666.7px;top:386.3px;width:1008.1px;height:272.5px;background:#fff;"></div>
<div class="a" style="left:668px;top:408px;width:1006.8px;height:1.1px;background:#dcdcdc;"></div>
<div class="a" style="left:668px;top:408px;width:1.1px;height:251.3px;background:#dcdcdc;"></div>
<div class="a" style="left:668px;top:658.3px;width:1006.8px;height:1.1px;background:#dcdcdc;"></div>
<div class="t" style="left:680.4px;top:394.48px;font-size:29.8px;color:#111;font-weight:bold;letter-spacing:0.03px;background:#fff;padding:0 7px 0 21px;">Auto tăng chỉ số</div>
<div class="t" style="left:712.7px;top:450.08px;font-size:27.6px;color:#4c4c58;font-weight:bold;letter-spacing:-1.06px;">Chỉ số</div>
<div class="t" style="left:1037.5px;top:450.08px;font-size:27.6px;color:#4c4c58;font-weight:bold;letter-spacing:-0.34px;">Ngưỡng</div>
<div class="t" style="left:1444.6px;top:450.08px;font-size:27.6px;color:#4c4c58;font-weight:bold;letter-spacing:0.05px;">Ưu tiên</div>
<div class="t" style="left:713.3px;top:507.93px;font-size:28px;color:#404040;letter-spacing:-2.2px;">HP</div>
<div class="t" style="left:713.3px;top:560.84px;font-size:28px;color:#404040;letter-spacing:-2.07px;">Ki</div>
<div class="t" style="left:713px;top:613.64px;font-size:28px;color:#404040;letter-spacing:-1.37px;">Sd</div>
<div class="a" style="left:1029.3px;top:492.9px;width:301.2px;height:158.8px;background:#f9fafc;border:2px solid #a6a6a6;box-sizing:border-box;"></div>
<div class="a" style="left:1029.3px;top:544.5px;width:301.2px;height:2px;background:#a6a6a6;"></div>
<div class="a" style="left:1029.3px;top:597.3px;width:301.2px;height:2px;background:#a6a6a6;"></div>
<div class="t" style="left:1033.6px;top:503.67px;font-size:28.4px;color:#111;">0</div>
<div class="a" style="left:1300.8px;top:497px;width:25.5px;height:20.5px;background:#fff;border:1px solid #dedede;border-radius:2px;box-sizing:border-box;"></div>
<div class="a" style="left:1300.8px;top:519.7px;width:25.5px;height:20.7px;background:#fff;border:1px solid #dedede;border-radius:2px;box-sizing:border-box;"></div>
<svg class="a" style="left:0;top:0" width="1841" height="1080"><polygon points="1307.3,510.9 1319.7,510.9 1313.5,503.9" fill="#111"/></svg>
<svg class="a" style="left:0;top:0" width="1841" height="1080"><polygon points="1307.3,526.5 1319.7,526.5 1313.5,533.5" fill="#111"/></svg>
<div class="t" style="left:1033.6px;top:556.53px;font-size:28.4px;color:#111;">0</div>
<div class="a" style="left:1300.8px;top:549.85px;width:25.5px;height:20.5px;background:#fff;border:1px solid #dedede;border-radius:2px;box-sizing:border-box;"></div>
<div class="a" style="left:1300.8px;top:572.55px;width:25.5px;height:20.7px;background:#fff;border:1px solid #dedede;border-radius:2px;box-sizing:border-box;"></div>
<svg class="a" style="left:0;top:0" width="1841" height="1080"><polygon points="1307.3,563.75 1319.7,563.75 1313.5,556.75" fill="#111"/></svg>
<svg class="a" style="left:0;top:0" width="1841" height="1080"><polygon points="1307.3,579.35 1319.7,579.35 1313.5,586.35" fill="#111"/></svg>
<div class="t" style="left:1033.6px;top:609.37px;font-size:28.4px;color:#111;">0</div>
<div class="a" style="left:1300.8px;top:602.7px;width:25.5px;height:20.5px;background:#fff;border:1px solid #dedede;border-radius:2px;box-sizing:border-box;"></div>
<div class="a" style="left:1300.8px;top:625.4px;width:25.5px;height:20.7px;background:#fff;border:1px solid #dedede;border-radius:2px;box-sizing:border-box;"></div>
<svg class="a" style="left:0;top:0" width="1841" height="1080"><polygon points="1307.3,616.6 1319.7,616.6 1313.5,609.6" fill="#111"/></svg>
<svg class="a" style="left:0;top:0" width="1841" height="1080"><polygon points="1307.3,632.2 1319.7,632.2 1313.5,639.2" fill="#111"/></svg>
<div class="a" style="left:1438.3px;top:493.7px;width:222.7px;height:51.5px;background:#f8f9fb;"></div>
<div class="a" style="left:1622.8px;top:493.7px;width:38.2px;height:51.5px;background:#f0f0f0;"></div>
<svg class="a" style="left:0;top:0" width="1841" height="1080"><polygon points="1637.3,516.35 1647.3,516.35 1642.3,521.35" fill="#111"/></svg>
<div class="t" style="left:1444.8px;top:507.08px;font-size:28.4px;color:#111;">1</div>
<div class="a" style="left:1438.3px;top:547.4px;width:222.7px;height:50.4px;background:#f8f9fb;"></div>
<div class="a" style="left:1622.8px;top:547.4px;width:38.2px;height:50.4px;background:#f0f0f0;"></div>
<svg class="a" style="left:0;top:0" width="1841" height="1080"><polygon points="1637.3,569.5 1647.3,569.5 1642.3,574.5" fill="#111"/></svg>
<div class="t" style="left:1444.8px;top:559.37px;font-size:28.4px;color:#111;">2</div>
<div class="a" style="left:1438.3px;top:600.2px;width:222.7px;height:50.4px;background:#f8f9fb;"></div>
<div class="a" style="left:1622.8px;top:600.2px;width:38.2px;height:50.4px;background:#f0f0f0;"></div>
<svg class="a" style="left:0;top:0" width="1841" height="1080"><polygon points="1637.3,622.3 1647.3,622.3 1642.3,627.3" fill="#111"/></svg>
<div class="t" style="left:1444.8px;top:611.87px;font-size:28.4px;color:#111;">3</div>
</section>
<section aria-label="Item">
<div class="a" style="left:660px;top:663.4px;width:1114px;height:416.6px;background:#f3f5fa;"></div>
<div class="a" style="left:665px;top:663.4px;width:1087.6px;height:413.6px;background:#fff;"></div>
<div class="a" style="left:665px;top:663.4px;width:1.1px;height:413.6px;background:#dcdcdc;"></div>
<div class="a" style="left:1751.8px;top:663.4px;width:1.1px;height:413.6px;background:#dcdcdc;"></div>
<div class="a" style="left:665px;top:1076px;width:1087.9px;height:1.1px;background:#dcdcdc;"></div>
<div class="t" style="left:701.5px;top:673.37px;font-size:24.2px;color:#404040;letter-spacing:-0.05px;">Nhặt item:</div>
<div class="t" style="left:980.2px;top:673.06px;font-size:24.2px;color:#404040;letter-spacing:-1.75px;">Có</div>
<div class="t" style="left:1078px;top:673.06px;font-size:24.2px;color:#404040;letter-spacing:-0.57px;">Không</div>
<div class="t" style="left:757.6px;top:725.47px;font-size:24.2px;color:#404040;letter-spacing:-0.28px;">Nhặt tất cả</div>
<div class="t" style="left:980.2px;top:725.47px;font-size:24.2px;color:#404040;letter-spacing:-0.22px;">Nhặt theo ID</div>
<div class="t" style="left:729.2px;top:826.56px;font-size:24.2px;color:#484848;letter-spacing:-0.36px;">Loại trừ ID item:</div>
<div class="t" style="left:701.8px;top:881.37px;font-size:24.2px;color:#404040;letter-spacing:-0.38px;">Auto vứt đồ rác:</div>
<div class="t" style="left:980.2px;top:880.87px;font-size:24.2px;color:#404040;letter-spacing:-1.75px;">Có</div>
<div class="t" style="left:1078px;top:880.87px;font-size:24.2px;color:#404040;letter-spacing:-0.57px;">Không</div>
<div class="t" style="left:728.9px;top:933.56px;font-size:24.2px;color:#a8a8a8;letter-spacing:-0.72px;">Danh sách ID vứt:</div>
<div class="t" style="left:701.8px;top:973.28px;font-size:24.2px;color:#404040;letter-spacing:-0.08px;">Auto bán đồ rác khi full ht:</div>
<div class="t" style="left:1034.9px;top:974.87px;font-size:24.2px;color:#404040;letter-spacing:-2.08px;">Có</div>
<div class="t" style="left:1132.6px;top:974.87px;font-size:24.2px;color:#404040;letter-spacing:-0.46px;">Không</div>
<div class="t" style="left:728.9px;top:1021.97px;font-size:24.2px;color:#a8a8a8;letter-spacing:-0.73px;">Danh sách ID bán:</div>
<div class="a" style="left:944.3px;top:671.1px;width:24.6px;height:24.6px;background:#0a5fc4;border-radius:4.5px;"><svg viewBox="0 0 16 16" width="24.6" height="24.6" style="display:block"><path d="M4.6 8.4 L7.1 10.8 L11.6 5.9" fill="none" stroke="#fff" stroke-width="1.09" stroke-linecap="round" stroke-linejoin="round"/></svg></div>
<div class="a" style="left:1042.1px;top:671.1px;width:24.6px;height:24.6px;background:#f3f3f3;border:2px solid #868686;border-radius:4.5px;box-sizing:border-box;"></div>
<div class="a" style="left:944.3px;top:879.4px;width:24.6px;height:24.6px;background:#f3f3f3;border:2px solid #868686;border-radius:4.5px;box-sizing:border-box;"></div>
<div class="a" style="left:1042.1px;top:879.4px;width:24.6px;height:24.6px;background:#0a5fc4;border-radius:4.5px;"><svg viewBox="0 0 16 16" width="24.6" height="24.6" style="display:block"><path d="M4.6 8.4 L7.1 10.8 L11.6 5.9" fill="none" stroke="#fff" stroke-width="1.09" stroke-linecap="round" stroke-linejoin="round"/></svg></div>
<div class="a" style="left:999.3px;top:973.3px;width:24.6px;height:24.6px;background:#f3f3f3;border:2px solid #868686;border-radius:4.5px;box-sizing:border-box;"></div>
<div class="a" style="left:1097px;top:973.3px;width:24.6px;height:24.6px;background:#0a5fc4;border-radius:4.5px;"><svg viewBox="0 0 16 16" width="24.6" height="24.6" style="display:block"><path d="M4.6 8.4 L7.1 10.8 L11.6 5.9" fill="none" stroke="#fff" stroke-width="1.09" stroke-linecap="round" stroke-linejoin="round"/></svg></div>
<div class="a" style="left:721.7px;top:723px;width:25px;height:25px;background:#fff;border:7.62px solid #0a5fc4;border-radius:12.5px;box-sizing:border-box;"></div>
<div class="a" style="left:944.3px;top:723px;width:25px;height:25px;background:#f4f4f4;border:1.5px solid #7a7a7a;border-radius:12.5px;box-sizing:border-box;"></div>
<div class="a" style="left:978.5px;top:814.7px;width:765.5px;height:43.7px;background:#f9fafc;border:2px solid #747474;box-sizing:border-box;"></div>
<div class="a" style="left:978.5px;top:921.4px;width:765.5px;height:43.6px;background:#f9fafc;border:2px solid #747474;box-sizing:border-box;"></div>
<div class="a" style="left:978.5px;top:1009.7px;width:765.5px;height:43.9px;background:#f9fafc;border:2px solid #747474;box-sizing:border-box;"></div>
</section>
</body></html>
